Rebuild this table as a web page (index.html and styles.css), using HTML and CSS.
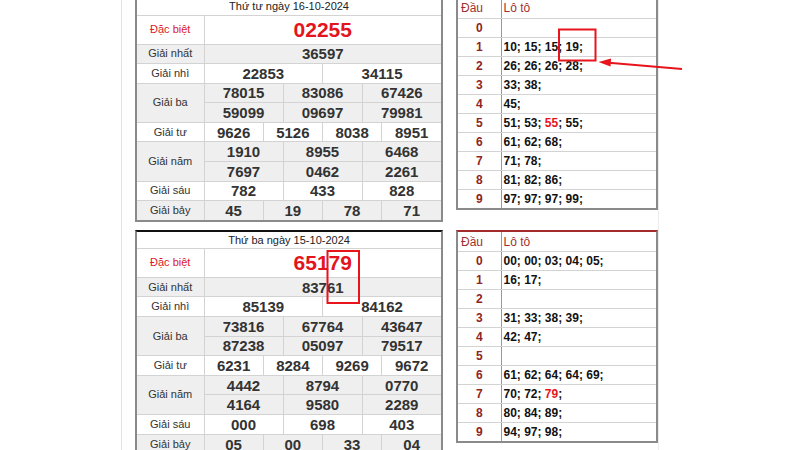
FILE: index.html
```html
<!DOCTYPE html>
<html lang="vi">
<head>
<meta charset="utf-8">
<title>Kết quả xổ số</title>
<link rel="stylesheet" href="styles.css">
</head>
<body>
<div class="page">
  <div class="frame">
    <div class="days">
      <div class="day">
        <div class="kq">
          <table class="kq-table">
            <colgroup><col class="c-label"><col span="12" class="c-num"></colgroup>
            <tr class="r-head"><td colspan="13" class="date">Thứ tư ngày 16-10-2024</td></tr>
            <tr class="r-db"><td class="lbl red">Đặc biệt</td><td colspan="12" class="db">02255</td></tr>
            <tr class="alt"><td class="lbl">Giải nhất</td><td colspan="12">36597</td></tr>
            <tr><td class="lbl">Giải nhì</td><td colspan="6">22853</td><td colspan="6">34115</td></tr>
            <tr class="alt"><td class="lbl" rowspan="2">Giải ba</td><td colspan="4">78015</td><td colspan="4">83086</td><td colspan="4">67426</td></tr>
            <tr class="alt"><td colspan="4">59099</td><td colspan="4">09697</td><td colspan="4">79981</td></tr>
            <tr><td class="lbl">Giải tư</td><td colspan="3">9626</td><td colspan="3">5126</td><td colspan="3">8038</td><td colspan="3">8951</td></tr>
            <tr class="alt"><td class="lbl" rowspan="2">Giải năm</td><td colspan="4">1910</td><td colspan="4">8955</td><td colspan="4">6468</td></tr>
            <tr class="alt"><td colspan="4">7697</td><td colspan="4">0462</td><td colspan="4">2261</td></tr>
            <tr><td class="lbl">Giải sáu</td><td colspan="4">782</td><td colspan="4">433</td><td colspan="4">828</td></tr>
            <tr class="alt"><td class="lbl">Giải bảy</td><td colspan="3">45</td><td colspan="3">19</td><td colspan="3">78</td><td colspan="3">71</td></tr>
          </table>
        </div>
        <div class="lt">
          <table class="lt-table">
            <colgroup><col class="c-dau"><col class="c-loto"></colgroup>
            <tr class="lt-head"><td class="dau">Đầu</td><td class="loto">Lô tô</td></tr>
            <tr><td class="d">0</td><td class="v"></td></tr>
            <tr><td class="d">1</td><td class="v">10; 15; 15; 19;</td></tr>
            <tr><td class="d">2</td><td class="v">26; 26; 26; 28;</td></tr>
            <tr><td class="d">3</td><td class="v">33; 38;</td></tr>
            <tr><td class="d">4</td><td class="v">45;</td></tr>
            <tr><td class="d">5</td><td class="v">51; 53; <span class="hl">55</span>; 55;</td></tr>
            <tr><td class="d">6</td><td class="v">61; 62; 68;</td></tr>
            <tr><td class="d">7</td><td class="v">71; 78;</td></tr>
            <tr><td class="d">8</td><td class="v">81; 82; 86;</td></tr>
            <tr><td class="d">9</td><td class="v">97; 97; 97; 99;</td></tr>
          </table>
        </div>
      </div>
      <div class="day">
        <div class="kq">
          <table class="kq-table">
            <colgroup><col class="c-label"><col span="12" class="c-num"></colgroup>
            <tr class="r-head"><td colspan="13" class="date">Thứ ba ngày 15-10-2024</td></tr>
            <tr class="r-db"><td class="lbl red">Đặc biệt</td><td colspan="12" class="db">65179</td></tr>
            <tr class="alt"><td class="lbl">Giải nhất</td><td colspan="12">83761</td></tr>
            <tr><td class="lbl">Giải nhì</td><td colspan="6">85139</td><td colspan="6">84162</td></tr>
            <tr class="alt"><td class="lbl" rowspan="2">Giải ba</td><td colspan="4">73816</td><td colspan="4">67764</td><td colspan="4">43647</td></tr>
            <tr class="alt"><td colspan="4">87238</td><td colspan="4">05097</td><td colspan="4">79517</td></tr>
            <tr><td class="lbl">Giải tư</td><td colspan="3">6231</td><td colspan="3">8284</td><td colspan="3">9269</td><td colspan="3">9672</td></tr>
            <tr class="alt"><td class="lbl" rowspan="2">Giải năm</td><td colspan="4">4442</td><td colspan="4">8794</td><td colspan="4">0770</td></tr>
            <tr class="alt"><td colspan="4">4164</td><td colspan="4">9580</td><td colspan="4">2289</td></tr>
            <tr><td class="lbl">Giải sáu</td><td colspan="4">000</td><td colspan="4">698</td><td colspan="4">403</td></tr>
            <tr class="alt"><td class="lbl">Giải bảy</td><td colspan="3">05</td><td colspan="3">00</td><td colspan="3">33</td><td colspan="3">04</td></tr>
          </table>
        </div>
        <div class="lt">
          <table class="lt-table">
            <colgroup><col class="c-dau"><col class="c-loto"></colgroup>
            <tr class="lt-head"><td class="dau">Đầu</td><td class="loto">Lô tô</td></tr>
            <tr><td class="d">0</td><td class="v">00; 00; 03; 04; 05;</td></tr>
            <tr><td class="d">1</td><td class="v">16; 17;</td></tr>
            <tr><td class="d">2</td><td class="v"></td></tr>
            <tr><td class="d">3</td><td class="v">31; 33; 38; 39;</td></tr>
            <tr><td class="d">4</td><td class="v">42; 47;</td></tr>
            <tr><td class="d">5</td><td class="v"></td></tr>
            <tr><td class="d">6</td><td class="v">61; 62; 64; 64; 69;</td></tr>
            <tr><td class="d">7</td><td class="v">70; 72; <span class="hl">79</span>;</td></tr>
            <tr><td class="d">8</td><td class="v">80; 84; 89;</td></tr>
            <tr><td class="d">9</td><td class="v">94; 97; 98;</td></tr>
          </table>
        </div>
      </div>
    </div>
  </div>
</div>
<svg class="marks" width="800" height="450" viewBox="0 0 800 450" aria-hidden="true">
  <rect x="559" y="29.5" width="36.5" height="31" fill="none" stroke="#e8141c" stroke-width="2"/>
  <rect x="327.5" y="251" width="31.5" height="52" fill="none" stroke="#e8141c" stroke-width="2"/>
  <line x1="682" y1="69" x2="606" y2="62.6" stroke="#e8141c" stroke-width="2"/>
  <polygon points="598.5,62 611,58.5 610.5,66.5" fill="#e8141c"/>
</svg>
</body>
</html>
```

FILE: styles.css
```css
html, body {
  margin: 0;
  padding: 0;
  background: #ffffff;
}
body {
  width: 800px;
  height: 450px;
  overflow: hidden;
  position: relative;
  font-family: "Liberation Sans", Arial, sans-serif;
  color: #333;
}
.page {
  display: flex;
  padding-left: 121px;
  height: 450px;
}
.frame {
  border-left: 1px solid #e2e2e2;
  border-right: 1px solid #ececec;
  padding-left: 13px;
  height: 450px;
}
.days {
  display: flex;
  flex-direction: column;
  gap: 8px;
  margin-top: -3px;
}
.day {
  display: flex;
  align-items: flex-start;
  gap: 13px;
}

/* results table */
.kq {
  width: 308px;
  box-sizing: border-box;
  border: 2px solid #8a8a8a;
  border-top: 2px solid #111;
}
.kq-table {
  width: 304px;
  table-layout: fixed;
  border-collapse: collapse;
  border-style: hidden;
}
.c-label { width: 67px; }
.c-num { width: 19.75px; }
.kq-table td {
  border: 1px solid #d3d3d3;
  padding: 0;
  text-align: center;
  vertical-align: middle;
  font-size: 15px;
  font-weight: bold;
  color: #333;
  line-height: 1;
  white-space: nowrap;
}
.kq-table tr { height: 19.6px; }
.kq-table tr.r-head { height: 16px; }
.kq-table tr.r-db { height: 29px; }
.kq-table tr.alt td { background: #efefef; }
.kq-table td.date {
  font-size: 11px;
  font-weight: normal;
  color: #222;
}
.kq-table td.lbl {
  font-size: 11px;
  font-weight: normal;
  color: #333;
}
.kq-table td.lbl.red { color: #e0202a; }
.kq-table td.db {
  font-size: 21px;
  color: #e3141d;
}

/* loto table */
.lt {
  width: 202px;
  box-sizing: border-box;
  border: 2px solid #8a8a8a;
  border-top: 2px solid #a52a2a;
}
.lt-table {
  width: 198px;
  table-layout: fixed;
  border-collapse: collapse;
  border-style: hidden;
}
.c-dau { width: 43px; }
.c-loto { width: 155px; }
.lt-table tr { height: 19px; }
.lt-table td {
  border: 1px solid #d3d3d3;
  padding: 0;
  font-size: 12px;
  line-height: 1;
  vertical-align: middle;
  white-space: nowrap;
}
.lt-table td.dau,
.lt-table td.d {
  border-right: 1px solid #9a9a9a;
}
.lt-table td.dau {
  color: #a3302f;
  padding-left: 3px;
}
.lt-table td.loto {
  color: #a3302f;
  padding-left: 2px;
}
.lt-table td.d {
  text-align: center;
  font-weight: bold;
  color: #8e2424;
}
.lt-table td.v {
  font-weight: bold;
  color: #111;
  padding-left: 2px;
}
.hl { color: #e8141c; }

.marks {
  position: absolute;
  left: 0;
  top: 0;
  pointer-events: none;
}
```
